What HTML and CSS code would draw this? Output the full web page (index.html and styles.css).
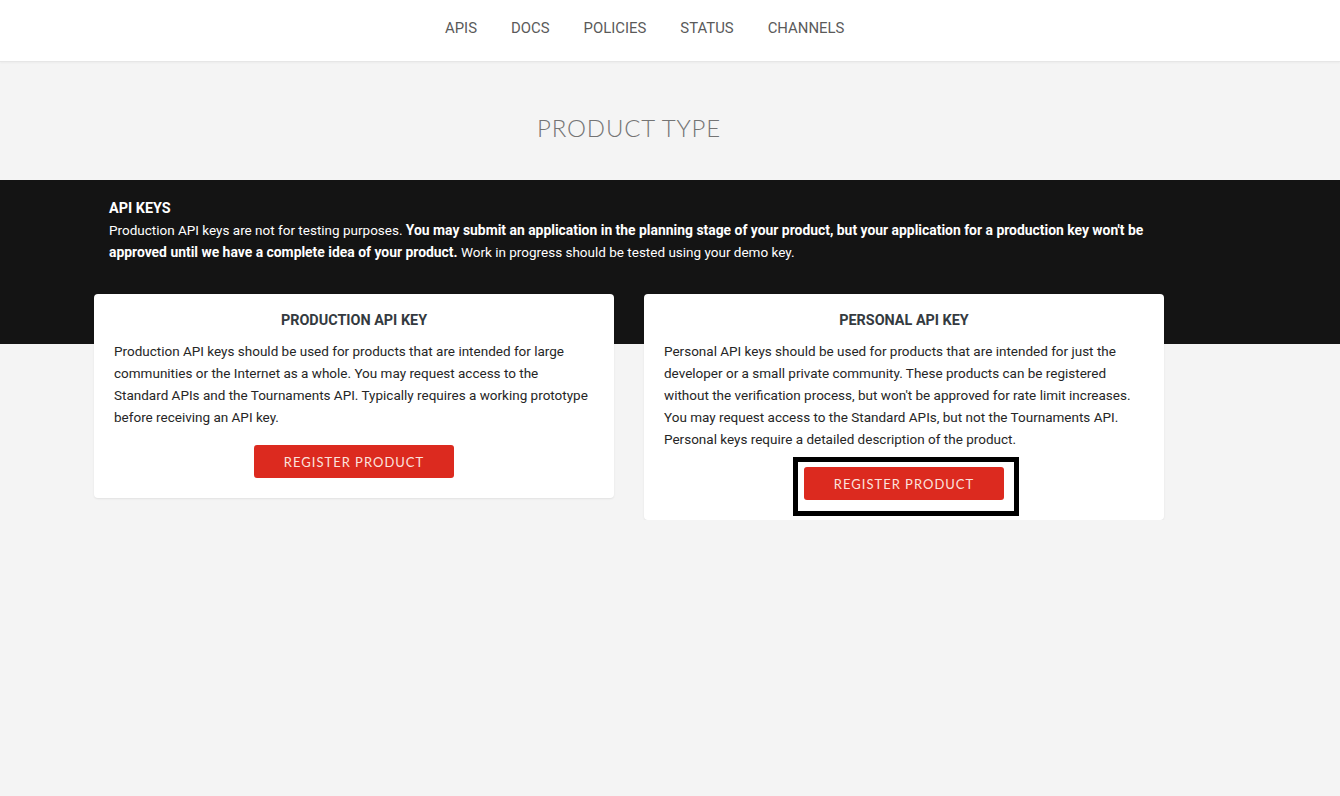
FILE: index.html
```html
<!DOCTYPE html>
<html lang="en">
<head>
    <meta charset="UTF-8">
    <meta name="viewport" content="width=device-width, initial-scale=1.0">
    <title>Product Type</title>
    <link rel="stylesheet" href="styles.css">
</head>
<body>

<header class="top-bar">
    <nav class="main-nav">
        <a href="#">APIS</a>
        <a href="#">DOCS</a>
        <a href="#">POLICIES</a>
        <a href="#">STATUS</a>
        <a href="#">CHANNELS</a>
    </nav>
</header>

<div class="page">
    <h1 class="page-title">PRODUCT TYPE</h1>
</div>

<section class="key-section">
    <div class="page">
        <div class="key-intro">
            <h2>API KEYS</h2>
            <p>Production API keys are not for testing purposes. <strong>You may submit an application in the planning stage of your product, but your application for a production key won't be approved until we have a complete idea of your product.</strong> Work in progress should be tested using your demo key.</p>
        </div>

        <div class="cards">
            <div class="card">
                <h3>PRODUCTION API KEY</h3>
                <p>Production API keys should be used for products that are intended for large communities or the Internet as a whole. You may request access to the Standard APIs and the Tournaments API. Typically requires a working prototype before receiving an API key.</p>
                <div class="card-action">
                    <a class="btn" href="#">REGISTER PRODUCT</a>
                </div>
            </div>
            <div class="card">
                <h3>PERSONAL API KEY</h3>
                <p>Personal API keys should be used for products that are intended for just the developer or a small private community. These products can be registered without the verification process, but won't be approved for rate limit increases. You may request access to the Standard APIs, but not the Tournaments API. Personal keys require a detailed description of the product.</p>
                <div class="card-action">
                    <span class="btn-wrap">
                        <a class="btn" href="#">REGISTER PRODUCT</a>
                        <span class="highlight"></span>
                    </span>
                </div>
            </div>
        </div>
    </div>
</section>

</body>
</html>
```
FILE: styles.css
```css
body {
    margin: 0;
    background-color: #f4f4f4;
    font-family: Roboto, "Liberation Sans", sans-serif;
    color: #2a2a2a;
}
.top-bar {
    height: 61px;
    background-color: #fff;
    border-bottom: 1px solid #e6e6e6;
    box-shadow: 0 1px 2px rgba(0, 0, 0, 0.04);
}
.main-nav {
    display: flex;
    gap: 34px;
    padding-left: 445px;
    line-height: 56px;
}
.main-nav a {
    font-size: 14.9px;
    color: #5a5a5a;
    text-decoration: none;
}
.page {
    width: 1070px;
    margin-left: 94px;
}
.page-title {
    margin: 0;
    padding: 51px 0 37px;
    text-align: center;
    font-family: Lato, sans-serif;
    font-weight: 300;
    font-size: 24px;
    line-height: 30px;
    letter-spacing: 0.8px;
    color: #747474;
}
.key-section {
    background: linear-gradient(to bottom, #141414 0, #141414 164px, #f4f4f4 164px);
}
.key-intro {
    padding: 19px 6px 31px 15px;
    color: #fff;
    font-size: 13.5px;
    line-height: 22px;
}
.key-intro h2 {
    margin: 0;
    font-size: 14.4px;
    line-height: 20px;
}
.key-intro p {
    margin: 0;
}
.key-intro strong {
    font-size: 13.9px;
}
.cards {
    display: flex;
    align-items: flex-start;
    gap: 30px;
}
.card {
    width: 520px;
    box-sizing: border-box;
    padding: 17px 20px 20px;
    background-color: #fff;
    border-radius: 4px;
    box-shadow: 0 1px 2px rgba(0, 0, 0, 0.08);
}
.card h3 {
    margin: 0 0 9px;
    text-align: center;
    font-size: 14.4px;
    line-height: 20px;
    color: #343a40;
}
.card p {
    margin: 0;
    font-size: 13.5px;
    line-height: 22px;
    color: #262626;
}
.card-action {
    margin-top: 17px;
    text-align: center;
}
.btn-wrap {
    position: relative;
    display: inline-block;
    vertical-align: top;
}
.btn {
    display: inline-block;
    vertical-align: top;
    width: 200px;
    height: 33px;
    line-height: 34px;
    background-color: #dc2a1f;
    border-radius: 3px;
    font-family: Lato, sans-serif;
    font-size: 13px;
    letter-spacing: 1px;
    color: #fbe2de;
    text-decoration: none;
}
.highlight {
    position: absolute;
    left: -11px;
    top: -10px;
    width: 226px;
    height: 59px;
    box-sizing: border-box;
    border: 5px solid #000;
}
```
